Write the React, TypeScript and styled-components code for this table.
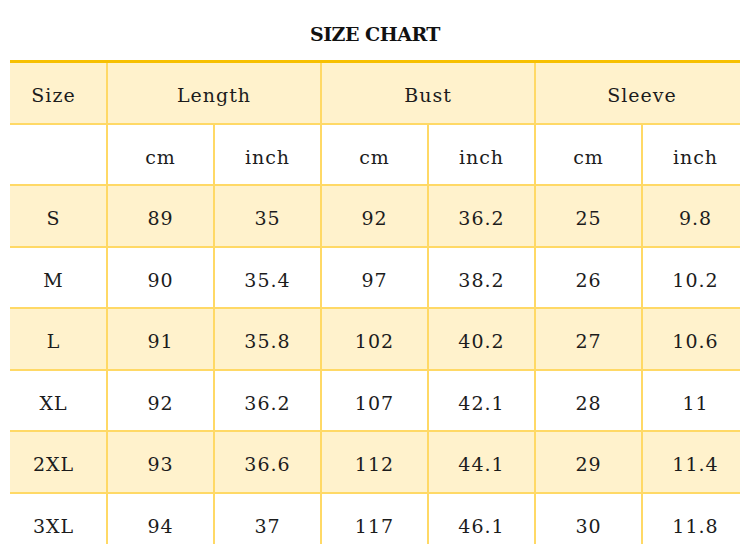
import React from "react";
import styled, { createGlobalStyle } from "styled-components";

const GlobalStyle = createGlobalStyle`
  html, body { margin: 0; padding: 0; background: #ffffff; }
  body { font-family: "DejaVu Serif", "Liberation Serif", serif; color: #1a1a1a; }
`;

const Page = styled.div`
  width: 750px;
  height: 555px;
  background: #ffffff;
  overflow: hidden;
`;

const Title = styled.h1`
  margin: 0;
  height: 60px;
  box-sizing: border-box;
  padding-top: 24px;
  text-align: center;
  font-size: 19px;
  line-height: 20px;
  letter-spacing: -0.5px;
  font-weight: 700;
  color: #111;
`;

const ChartClip = styled.div`
  margin-left: 10px;
  width: 730px;
  height: 484px;
  overflow: hidden;
`;

const Grid = styled.div`
  margin-left: -9px;
  width: 760px;
  display: grid;
  grid-template-columns: repeat(7, 105px);
  grid-auto-rows: 59.5px;
  gap: 2px;
  background: #ffd966;
  border-top: 3px solid #f7c000;
`;

const Cell = styled.div<{ $tint: boolean; $span?: number }>`
  grid-column: span ${(p) => p.$span ?? 1};
  background: ${(p) => (p.$tint ? "#fff2cc" : "#ffffff")};
  display: flex;
  align-items: center;
  justify-content: center;
  padding-top: 5px;
  box-sizing: border-box;
  font-size: 19px;
  letter-spacing: 1px;
  color: #1c1c1c;
  white-space: nowrap;
`;

const units = ["cm", "inch", "cm", "inch", "cm", "inch"];

const rows: string[][] = [
  ["S", "89", "35", "92", "36.2", "25", "9.8"],
  ["M", "90", "35.4", "97", "38.2", "26", "10.2"],
  ["L", "91", "35.8", "102", "40.2", "27", "10.6"],
  ["XL", "92", "36.2", "107", "42.1", "28", "11"],
  ["2XL", "93", "36.6", "112", "44.1", "29", "11.4"],
  ["3XL", "94", "37", "117", "46.1", "30", "11.8"],
];

export default function App() {
  return (
    <>
      <GlobalStyle />
      <Page>
        <Title>SIZE CHART</Title>
        <ChartClip>
          <Grid>
            <Cell $tint>Size</Cell>
            <Cell $tint $span={2}>Length</Cell>
            <Cell $tint $span={2}>Bust</Cell>
            <Cell $tint $span={2}>Sleeve</Cell>
            <Cell $tint={false} />
            {units.map((u, i) => (
              <Cell key={`u${i}`} $tint={false}>{u}</Cell>
            ))}
            {rows.map((r, ri) =>
              r.map((v, ci) => (
                <Cell key={`${ri}-${ci}`} $tint={ri % 2 === 0}>{v}</Cell>
              ))
            )}
          </Grid>
        </ChartClip>
      </Page>
    </>
  );
}
